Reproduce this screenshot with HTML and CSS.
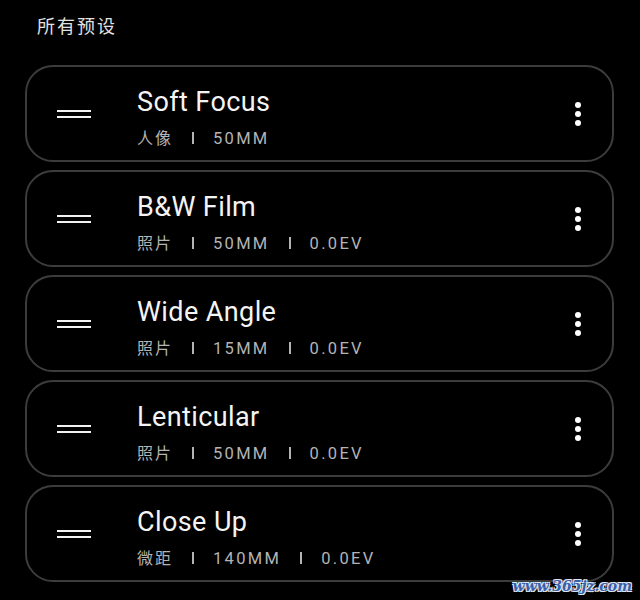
FILE: index.html
```html
<!DOCTYPE html>
<html lang="zh">
<head>
<meta charset="utf-8">
<link rel="stylesheet" href="styles.css">
</head>
<body>
<div class="page">
  <h1 class="heading">所有预设</h1>
  <ul class="list">
    <li class="card">
      <svg class="handle" width="34" height="8" viewBox="0 0 34 8"><rect x="0" y="0" width="34" height="2" fill="#f2f2f2"/><rect x="0" y="6" width="34" height="2" fill="#f2f2f2"/></svg>
      <div class="text">
        <div class="title">Soft Focus</div>
        <div class="meta"><span class="cjk">人像</span><span class="bar"></span><span>50MM</span></div>
      </div>
      <svg class="more" width="6" height="24" viewBox="0 0 6 24"><circle cx="3" cy="3" r="3" fill="#fff"/><circle cx="3" cy="12" r="3" fill="#fff"/><circle cx="3" cy="21" r="3" fill="#fff"/></svg>
    </li>
    <li class="card">
      <svg class="handle" width="34" height="8" viewBox="0 0 34 8"><rect x="0" y="0" width="34" height="2" fill="#f2f2f2"/><rect x="0" y="6" width="34" height="2" fill="#f2f2f2"/></svg>
      <div class="text">
        <div class="title">B&amp;W Film</div>
        <div class="meta"><span class="cjk">照片</span><span class="bar"></span><span>50MM</span><span class="bar"></span><span>0.0EV</span></div>
      </div>
      <svg class="more" width="6" height="24" viewBox="0 0 6 24"><circle cx="3" cy="3" r="3" fill="#fff"/><circle cx="3" cy="12" r="3" fill="#fff"/><circle cx="3" cy="21" r="3" fill="#fff"/></svg>
    </li>
    <li class="card">
      <svg class="handle" width="34" height="8" viewBox="0 0 34 8"><rect x="0" y="0" width="34" height="2" fill="#f2f2f2"/><rect x="0" y="6" width="34" height="2" fill="#f2f2f2"/></svg>
      <div class="text">
        <div class="title">Wide Angle</div>
        <div class="meta"><span class="cjk">照片</span><span class="bar"></span><span>15MM</span><span class="bar"></span><span>0.0EV</span></div>
      </div>
      <svg class="more" width="6" height="24" viewBox="0 0 6 24"><circle cx="3" cy="3" r="3" fill="#fff"/><circle cx="3" cy="12" r="3" fill="#fff"/><circle cx="3" cy="21" r="3" fill="#fff"/></svg>
    </li>
    <li class="card">
      <svg class="handle" width="34" height="8" viewBox="0 0 34 8"><rect x="0" y="0" width="34" height="2" fill="#f2f2f2"/><rect x="0" y="6" width="34" height="2" fill="#f2f2f2"/></svg>
      <div class="text">
        <div class="title">Lenticular</div>
        <div class="meta"><span class="cjk">照片</span><span class="bar"></span><span>50MM</span><span class="bar"></span><span>0.0EV</span></div>
      </div>
      <svg class="more" width="6" height="24" viewBox="0 0 6 24"><circle cx="3" cy="3" r="3" fill="#fff"/><circle cx="3" cy="12" r="3" fill="#fff"/><circle cx="3" cy="21" r="3" fill="#fff"/></svg>
    </li>
    <li class="card">
      <svg class="handle" width="34" height="8" viewBox="0 0 34 8"><rect x="0" y="0" width="34" height="2" fill="#f2f2f2"/><rect x="0" y="6" width="34" height="2" fill="#f2f2f2"/></svg>
      <div class="text">
        <div class="title">Close Up</div>
        <div class="meta"><span class="cjk">微距</span><span class="bar"></span><span>140MM</span><span class="bar"></span><span>0.0EV</span></div>
      </div>
      <svg class="more" width="6" height="24" viewBox="0 0 6 24"><circle cx="3" cy="3" r="3" fill="#fff"/><circle cx="3" cy="12" r="3" fill="#fff"/><circle cx="3" cy="21" r="3" fill="#fff"/></svg>
    </li>
  </ul>
  <div class="watermark">www.365jz.com</div>
</div>
</body>
</html>
```

FILE: styles.css
```css
html, body {
  margin: 0;
  padding: 0;
  background: #000;
}

body {
  font-family: Roboto, "Noto Sans CJK SC", sans-serif;
  color: #f2f2f2;
}

.page {
  position: relative;
  width: 640px;
  height: 600px;
  overflow: hidden;
  padding-top: 13px;
  box-sizing: border-box;
}

.heading {
  margin: 0 0 28px 37px;
  font-family: "Noto Sans CJK SC", sans-serif;
  font-size: 18px;
  font-weight: 400;
  line-height: 24px;
  letter-spacing: 2px;
  color: #e2e2e2;
}

.list {
  list-style: none;
  margin: 0 0 0 25px;
  padding: 0;
  width: 589px;
  display: flex;
  flex-direction: column;
  gap: 8px;
}

.card {
  box-sizing: border-box;
  height: 97px;
  border: 2px solid #3c3c3c;
  border-radius: 28px;
  display: flex;
  align-items: center;
  padding: 0 31px 0 30px;
}

.handle {
  flex: none;
  display: block;
  margin-top: 1px;
}

.text {
  flex: 1;
  margin-left: 46px;
  padding-top: 7px;
}

.title {
  font-size: 27px;
  line-height: 34px;
  font-weight: 400;
  letter-spacing: 0.4px;
  color: #f4f4f4;
}

.meta {
  margin-top: 7px;
  display: flex;
  align-items: baseline;
  gap: 19px;
  font-size: 16.5px;
  line-height: 22px;
  letter-spacing: 2.3px;
  color: #b4b4b4;
}

.cjk {
  font-family: "Noto Sans CJK SC", sans-serif;
  font-size: 16px;
  letter-spacing: 2px;
}

.bar {
  display: inline-block;
  width: 2px;
  height: 12px;
  background: #b4b4b4;
}

.more {
  flex: none;
  display: block;
}

.watermark {
  position: absolute;
  right: 8px;
  bottom: 6px;
  font-family: "DejaVu Serif", serif;
  font-weight: bold;
  font-style: italic;
  font-size: 14px;
  color: #3b5fa8;
  text-shadow: -1px -1px 0 #dfe6f2, 1px -1px 0 #dfe6f2, -1px 1px 0 #dfe6f2, 1px 1px 0 #dfe6f2;
}
```
